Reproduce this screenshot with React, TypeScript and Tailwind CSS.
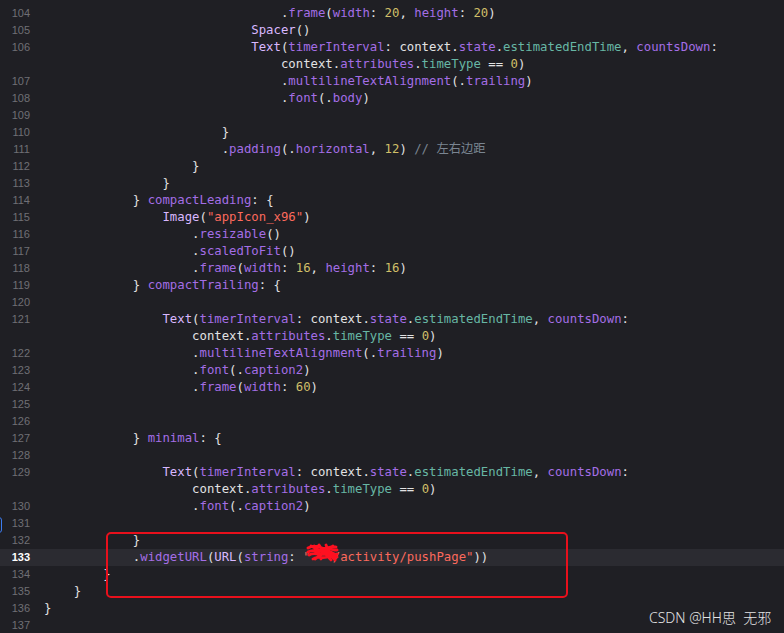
import type { ReactNode } from 'react'

type Row = { n?: number; col: number; code: string }

const TYPES = new Set(['Spacer', 'Text', 'Image', 'URL'])
const TEAL = new Set(['estimatedEndTime', 'timeType'])
const PLAIN = new Set(['context'])

const COLOR = {
  plain: 'text-[#e2e2e3]',
  type: 'text-[#d9b8ff]',
  member: 'text-[#a46ee6]',
  teal: 'text-[#67b7a4]',
  num: 'text-[#d0bf69]',
  str: 'text-[#fc6a5d]',
  comment: 'text-[#7a8591]',
}

const rows: Row[] = [
  { n: 104, col: 32, code: '.frame(width: 20, height: 20)' },
  { n: 105, col: 28, code: 'Spacer()' },
  { n: 106, col: 28, code: 'Text(timerInterval: context.state.estimatedEndTime, countsDown:' },
  { col: 32, code: 'context.attributes.timeType == 0)' },
  { n: 107, col: 32, code: '.multilineTextAlignment(.trailing)' },
  { n: 108, col: 32, code: '.font(.body)' },
  { n: 109, col: 0, code: '' },
  { n: 110, col: 24, code: '}' },
  { n: 111, col: 24, code: '.padding(.horizontal, 12) // 左右边距' },
  { n: 112, col: 20, code: '}' },
  { n: 113, col: 16, code: '}' },
  { n: 114, col: 12, code: '} compactLeading: {' },
  { n: 115, col: 16, code: 'Image("appIcon_x96")' },
  { n: 116, col: 20, code: '.resizable()' },
  { n: 117, col: 20, code: '.scaledToFit()' },
  { n: 118, col: 20, code: '.frame(width: 16, height: 16)' },
  { n: 119, col: 12, code: '} compactTrailing: {' },
  { n: 120, col: 0, code: '' },
  { n: 121, col: 16, code: 'Text(timerInterval: context.state.estimatedEndTime, countsDown:' },
  { col: 20, code: 'context.attributes.timeType == 0)' },
  { n: 122, col: 20, code: '.multilineTextAlignment(.trailing)' },
  { n: 123, col: 20, code: '.font(.caption2)' },
  { n: 124, col: 20, code: '.frame(width: 60)' },
  { n: 125, col: 0, code: '' },
  { n: 126, col: 0, code: '' },
  { n: 127, col: 12, code: '} minimal: {' },
  { n: 128, col: 0, code: '' },
  { n: 129, col: 16, code: 'Text(timerInterval: context.state.estimatedEndTime, countsDown:' },
  { col: 20, code: 'context.attributes.timeType == 0)' },
  { n: 130, col: 20, code: '.font(.caption2)' },
  { n: 131, col: 0, code: '' },
  { n: 132, col: 12, code: '}' },
  // host part is scribbled out in the screenshot
  { n: 133, col: 12, code: '.widgetURL(URL(string: "   /activity/pushPage"))' },
  { n: 134, col: 8, code: '}' },
  { n: 135, col: 4, code: '}' },
  { n: 136, col: 0, code: '}' },
  { n: 137, col: 0, code: '' },
]

// tiny swift highlighter, good enough for this snippet
function highlight(code: string): ReactNode[] {
  const out: ReactNode[] = []
  const re = /(\/\/.*$)|("[^"]*")|(\b\d+\b)|([A-Za-z_][A-Za-z0-9_]*)|(\s+)|([^\sA-Za-z0-9_"]+)/g
  let m: RegExpExecArray | null
  let i = 0
  while ((m = re.exec(code))) {
    let cls = COLOR.plain
    if (m[1]) cls = COLOR.comment
    else if (m[2]) cls = COLOR.str
    else if (m[3]) cls = COLOR.num
    else if (m[4]) {
      const w = m[4]
      if (TYPES.has(w)) cls = COLOR.type
      else if (TEAL.has(w)) cls = COLOR.teal
      else if (PLAIN.has(w)) cls = COLOR.plain
      else cls = COLOR.member
    }
    out.push(
      <span key={i++} className={cls}>
        {m[0]}
      </span>
    )
  }
  return out
}

// red marker scribble hiding part of the url
function Scribble() {
  return (
    <svg className="absolute left-[306px] top-[543px] h-[19px] w-[33px]" viewBox="0 0 33 19" fill="none">
      <path
        d="M2 5 C7 2 12 3 16 5 C20 7 25 2 30 4 M2 9 C8 5 14 11 20 7 C25 4 28 8 31 7 M3 12 C9 8 15 14 21 10 C26 7 28 13 31 11 M7 16 C12 12 18 17 23 13 C27 11 29 15 31 14 M5 3 L28 15 M9 16 L27 3 M13 2 C17 10 21 12 25 17 M20 2 C22 8 24 12 29 17 M8 3 C10 9 12 12 15 16"
        stroke="#ff1020"
        strokeWidth="2.8"
        strokeLinecap="round"
      />
    </svg>
  )
}

export default function App() {
  return (
    <div className="relative h-[633px] w-[784px] overflow-hidden bg-[#1f1f24]">
      <div className="flex flex-col pt-[4.5px]">
        {rows.map((r, idx) => {
          const current = r.n === 133
          return (
            <div key={idx} className={`relative flex h-[17px] items-center ${current ? 'bg-[#2b2b31]' : ''}`}>
              <div
                className={`w-[44px] shrink-0 pr-[14px] text-right font-['Liberation_Sans',sans-serif] text-[11px] tabular-nums ${
                  current ? 'font-bold text-white' : 'text-[#6f6f75]'
                }`}
              >
                {r.n ?? ''}
              </div>
              {r.n === 131 && (
                <div className="absolute left-[-7px] top-[2px] h-[16px] w-[9px] rounded-[3px] border border-[#3c7cf0]" />
              )}
              <pre className="m-0 whitespace-pre font-['DejaVu_Sans_Mono','Noto_Sans_CJK_SC',monospace] text-[12.3px] leading-[17px]">
                {' '.repeat(r.col)}
                {highlight(r.code)}
              </pre>
            </div>
          )
        })}
      </div>

      <Scribble />
      <div className="absolute left-[106px] top-[532px] h-[66px] w-[462px] rounded-[5px] border-2 border-[#e8101c]" />

      <div className="absolute left-[649px] top-[609px] font-['Noto_Sans','Noto_Sans_CJK_SC',sans-serif] text-[14px] font-light leading-[18px] text-[#e4e4e4]">
        CSDN @HH思&nbsp;&nbsp;无邪
      </div>
    </div>
  )
}
